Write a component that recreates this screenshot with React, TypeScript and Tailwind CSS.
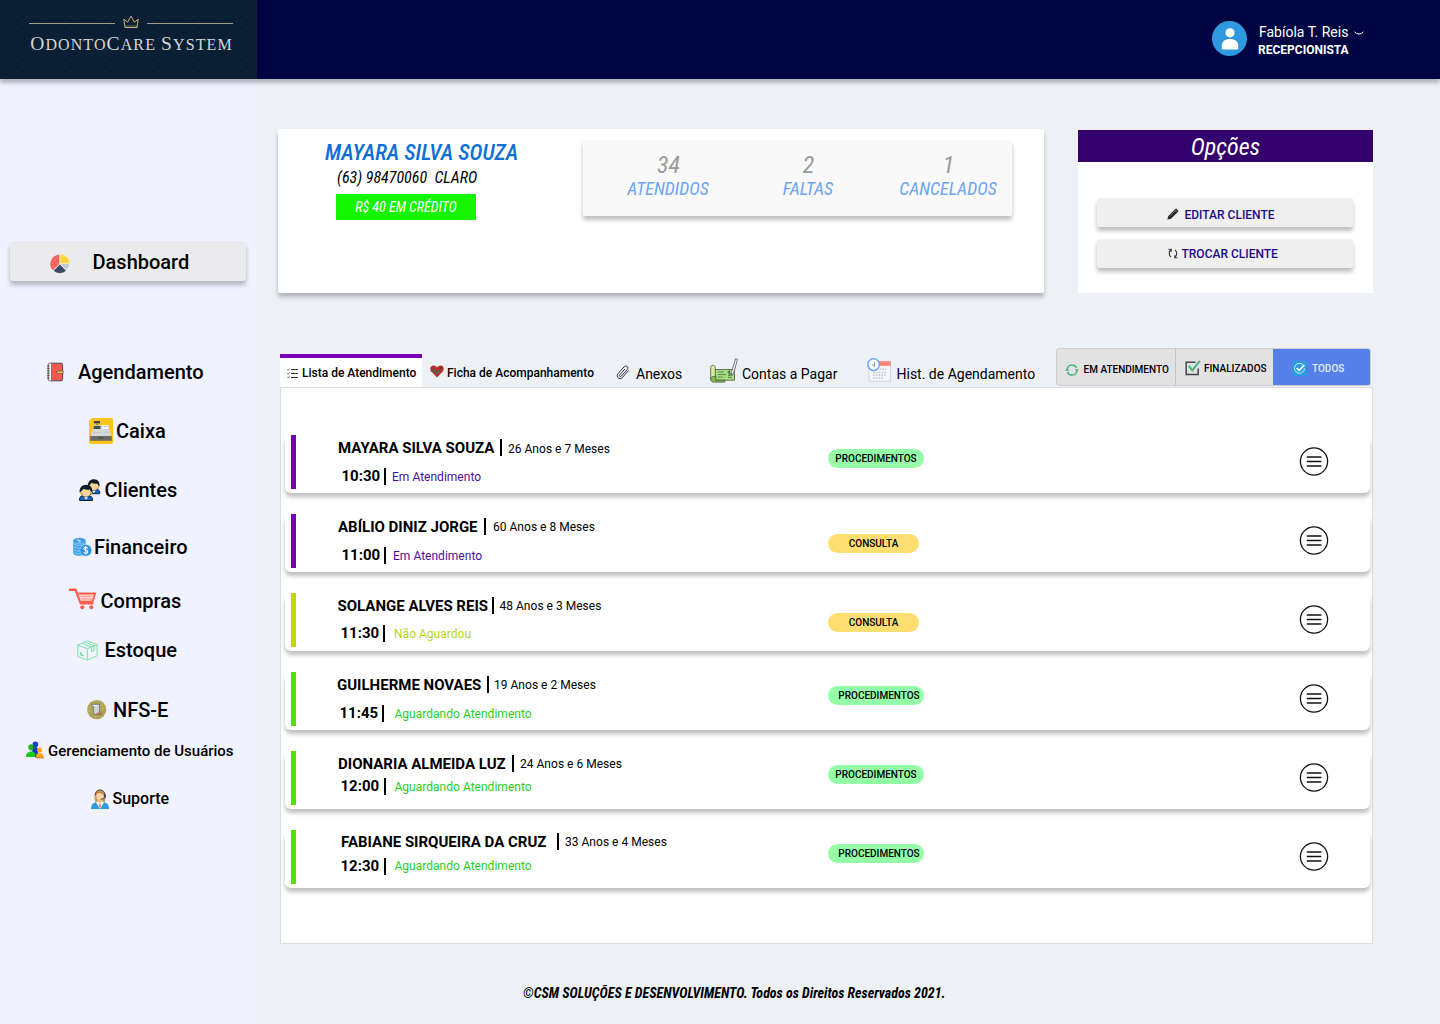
import type { ReactNode } from "react";

/* ---------- sidebar icons ---------- */

const PieIcon = () => (
  <svg className="h-5 w-5" viewBox="0 0 20 20">
    <path d="M9.3 10 L9.3 .8 A9.3 9.3 0 0 0 2.6 16.2 Z" fill="#f8605a" />
    <path d="M10.4 9.3 V.3 A9.3 9.3 0 0 1 19.6 9.3 Z" fill="#ffd93b" />
    <path d="M10.6 10 H19 A9 9 0 0 1 16.6 15.8 Z" fill="#c3c6cc" />
    <path d="M9.8 10.6 L16 16.8 A9 9 0 0 1 3.6 16.8 Z" fill="#3f4b66" />
    <g fill="#fbb7a8">
      <circle cx="5" cy="6" r=".5" /><circle cx="7.3" cy="4" r=".5" /><circle cx="3" cy="9" r=".5" />
      <circle cx="6" cy="9" r=".5" /><circle cx="3.5" cy="12.5" r=".5" />
    </g>
    <g fill="#e8a72d">
      <circle cx="13" cy="4" r=".5" /><circle cx="15.5" cy="4" r=".5" /><circle cx="13" cy="7" r=".5" /><circle cx="16" cy="7" r=".5" />
    </g>
  </svg>
);

const AgendaIcon = () => (
  <svg className="h-5 w-[18px]" viewBox="0 0 18 20">
    <rect x="1.2" y="1.2" width="14.4" height="17.6" rx="1.6" fill="#f7594f" stroke="#434a56" />
    <path d="M1.8 1.6h2.6v16.8H1.8z" fill="#fff" />
    <path d="M4.6 1.5v17" stroke="#434a56" strokeWidth=".6" />
    <path d="M0 4h3M0 6.4h3M0 8.8h3M0 11.2h3M0 13.6h3M0 16h3" stroke="#434a56" strokeWidth=".7" />
    <path d="M9 10.3l2.2-1.2h5v2.4h-5z" fill="#f5c84b" stroke="#434a56" strokeWidth=".6" />
  </svg>
);

const CashIcon = () => (
  <svg className="h-[26px] w-6" viewBox="0 0 24 26">
    <path d="M3 0h19a2 2 0 0 1 2 2v22a2 2 0 0 1-2 2H2a2 2 0 0 1-2-2V3z" fill="#f9c51b" />
    <path d="M5 3h6v2.4H5z" fill="#3d4752" /><path d="M7.4 5.4h1.4V8H7.4z" fill="#777" />
    <path d="M4.5 7.5h15l2.6 10.5H2z" fill="#d5d6d8" />
    <path d="M5 8h6.5v3H4.4z" fill="#434c57" />
    <path d="M13.5 7h5.5v4h-5.5z" fill="#fff" /><path d="M14.5 8.5h3.5" stroke="#999" strokeWidth=".7" />
    <path d="M4.5 14.500h8M15 14.500h4.600" stroke="#c0c2c5" strokeWidth=".7" />
    <path d="M1.200 18h21.600v4.800H1.200z" fill="#6b6b66" />
    <path d="M9.500 20h5" stroke="#3b3b3b" strokeWidth="1" />
  </svg>
);

const Head = () => (
  <g>
    <path d="M.6 16v-1.800c0-2 2-2.800 4.400-3.200h4c2.400.4 4.400 1.200 4.400 3.200V16z" fill="#1264c6" stroke="#111c2c" />
    <path d="M5.300 11.500h3.600l-.6 2.500-1.300 1-1.300-1z" fill="#fff" />
    <ellipse cx="7" cy="7.400" rx="5.300" ry="5.200" fill="#f6d39a" stroke="#3a2d1a" strokeWidth=".6" />
    <path d="M.7 8C.1 3 3 .2 7.300.2S13.800 3.300 13.200 8l-1.400-1.200-1-1.800c-2 .5-4.500.2-6-.8L2.200 6.800z" fill="#121c24" />
    <circle cx="1.700" cy="8.400" r=".9" fill="#ffc52d" /><circle cx="12.300" cy="8.400" r=".9" fill="#ffc52d" />
  </g>
);

const ClientsIcon = () => (
  <svg className="h-[22px] w-[22px]" viewBox="0 0 22 22">
    <g transform="translate(8.4 0) scale(.92)"><Head /></g>
    <g transform="translate(0 5.5)"><Head /></g>
  </svg>
);

const CoinsIcon = () => (
  <svg className="h-5 w-5" viewBox="0 0 20 20">
    <path d="M1 3.500v12.400c0 1.600 2.600 2.800 6 2.800s6-1 6.800-2.500V3.500z" fill="#3a9fe8" />
    <path d="M1 6c1 3 10 3.400 12.800 0M1 8.700c1 3 10 3.400 12.800 0M1 11.400c1 3 8 3.400 11 1.400M1 14.100c1 2.600 6 3.400 9 2.200" fill="none" stroke="#d8edff" strokeWidth=".6" />
    <ellipse cx="7.400" cy="3.700" rx="6.500" ry="3" fill="#3a9fe8" stroke="#d8edff" strokeWidth=".4" />
    <path d="M5 3.300c1-1 2.500.8 3.400 0M6.400 4.600c1 .6 2 .2 2.600-.3" stroke="#fff" fill="none" strokeWidth=".9" />
    <circle cx="13.800" cy="13.300" r="5.900" fill="#2992e4" stroke="#d8edff" strokeWidth=".5" />
    <path d="M15.900 11.400c-.5-1-1.200-1.200-2.100-1.200-2.600 0-2.600 2.600 0 3 2.800.5 2.600 3.300 0 3.300-1.100 0-1.800-.4-2.200-1.400M13.800 9v8.600" stroke="#fff" strokeWidth="1.100" fill="none" />
  </svg>
);

const CartRedIcon = () => (
  <svg className="-mt-1 h-[22px] w-7" viewBox="0 0 28 22">
    <path d="M0 1.800h6.600l5 13.400h12.800" fill="none" stroke="#fb5f4c" strokeWidth="2.400" strokeLinejoin="round" />
    <path d="M9.400 5.500h16.800l-2.600 8.200H12.200" fill="#f8d6cf" stroke="#fb5f4c" strokeWidth="1.800" />
    <path d="M11 8.300h14M12 11h12" stroke="#fb8a7b" strokeWidth=".8" />
    <circle cx="13.300" cy="19.200" r="2" fill="#fb5f4c" /><circle cx="22.300" cy="19.200" r="2" fill="#fb5f4c" />
  </svg>
);

const BoxIcon = () => (
  <svg className="h-[21px] w-[21px]" viewBox="0 0 21 21" fill="none" stroke="#6fe29a" strokeWidth=".9">
    <path d="M.8 5.200L10.300.8l9.800 3.800v11.200l-9.800 4.400-9.500-3.800z" />
    <path d="M.8 5.200l9.500 3.600 9.800-4.200M10.300 8.800v11.400M5 3.300l9.600 3.800v4.600l2.600-1.200V6L7.600 2" />
    <path d="M2.800 12.200l2.200 1.600M3 14.500l3.600 1.400" stroke="#35b56d" />
  </svg>
);

const InvoiceIcon = () => (
  <svg className="h-5 w-5" viewBox="0 0 20 20">
    <circle cx="9.700" cy="9.600" r="9.600" fill="#afa558" />
    <g fill="#d8d878"><circle cx="4" cy="6" r=".6" /><circle cx="16" cy="8" r=".6" /><circle cx="3" cy="11" r=".6" /><circle cx="8" cy="17" r=".6" /><circle cx="15" cy="5" r=".6" /></g>
    <path d="M4.800 4.300h7.600v10H6.800V6.400h-2z" fill="#e8e8f2" stroke="#5b5b66" strokeWidth=".7" />
    <path d="M9 6v7M10.800 6v7" stroke="#8a8fa8" strokeWidth=".5" />
    <path d="M10 13h4.600v1.600H10z" fill="#e87a62" stroke="#7c4433" strokeWidth=".4" />
  </svg>
);

const UsersIcon = () => (
  <svg className="-mt-[3px] h-[18px] w-[18px]" viewBox="0 0 18 18">
    <circle cx="9.400" cy="3.400" r="2.800" fill="#1838d8" /><path d="M6.200 15V9c0-4 6-4 6 0v6z" fill="#1838d8" />
    <circle cx="5.400" cy="6.300" r="3.100" fill="#1eb524" /><path d="M0 16c0-4 2.600-5.400 5.400-5.400S10.600 12 10.600 16z" fill="#19c91f" />
    <circle cx="13.700" cy="9" r="2.500" fill="#fca91b" /><path d="M9.600 17c0-4 1.600-5 4-5s4.200 1 4.200 5z" fill="#fca91b" />
    <path d="M7.700 4v6.500l2 2v4" stroke="#123f2c" strokeWidth=".7" fill="none" />
    <path d="M10 16.900h7.900" stroke="#c96a55" strokeWidth=".9" />
  </svg>
);

const SupportIcon = () => (
  <svg className="-mt-px h-5 w-[18px]" viewBox="0 0 18 20">
    <path d="M4.400 13.200C2.600 8 3.200 1 9 .8c5.800.2 6.400 7 4.800 12.400z" fill="#c99c5a" />
    <path d="M0 20c0-5 2.400-6.200 6-7h6c3.600.8 6 2 6 7z" fill="#2c9be0" />
    <path d="M5 13.200l4 6.800 4-6.800-2-.8H7z" fill="#fff" />
    <path d="M9 14l-1 2 1 4 1-4z" fill="#eb5e52" />
    <path d="M7.200 10h3.600v3L9 14.300 7.200 13z" fill="#f1c295" />
    <ellipse cx="9" cy="6.800" rx="3.600" ry="4.300" fill="#fad5ab" />
    <path d="M5.200 6.300c1-3 4-3.400 7.600 0l.4-2.200C11 1.600 7 1.600 4.800 4z" fill="#d8813f" />
    <path d="M4.200 6.200C4.400-.8 13.600-.8 14 6.200v2c-.8 1.600-2.600 2-4.600 2" fill="none" stroke="#444a55" strokeWidth="1" />
    <path d="M13 5.200h2v3.600h-2z" fill="#444a55" />
  </svg>
);

/* ---------- tab and button icons ---------- */

const ListCheckIcon = () => (
  <svg className="h-[11px] w-[11px]" viewBox="0 0 11 11" fill="none" stroke="#333" strokeWidth="1">
    <path d="M4 1.500H11M4 5.500H11M4 9.500H11" />
    <path d="M.3 1.600l.9.8L2.700.6M.3 5.400l.9.8 1.500-1.800M.3 9.200l.9.8 1.500-1.800" strokeWidth=".7" />
  </svg>
);

const HeartIcon = () => (
  <svg className="-mt-[3px] h-[13px] w-[14px]" viewBox="0 0 14 13">
    <path d="M7 12.400L1.300 6.600C-.8 4 .5.6 3.400.5 5 .5 6.200 1.300 7 2.500 7.800 1.300 9 .5 10.600.5c2.900.1 4.200 3.500 2.100 6.100z" fill="#b8312e" />
    <path d="M.8 6.500H4l1-2.300 1.500 5 1.300-3.800.7 1.300h1.800" fill="none" stroke="#2d7653" strokeWidth="1" />
    <path d="M11.800 1.500l-1.600 2.300" stroke="#4f1713" strokeWidth="1" />
  </svg>
);

const ClipIcon = () => (
  <svg className="-mt-[3px] h-[15px] w-[14px]" viewBox="0 0 14 15" fill="none" stroke="#333a40" strokeWidth="1" strokeLinecap="round">
    <path d="M8.600 4.300L3.700 9.900c-.9 1.200.6 2.400 1.600 1.300l6-6.800c1.900-2.300-1-4.900-3-2.800L2 8.600c-2.400 3 1.300 6.900 4.200 4.200l6.300-7.200" />
  </svg>
);

const CheckBookIcon = () => (
  <svg className="h-[25px] w-7" viewBox="0 0 28 25">
    <path d="M5 11.500h19.500v10.700H5z" fill="#a4dc80" stroke="#4b5b3f" strokeWidth=".8" />
    <path d="M.7 9.500c0-3 4.600-3 4.600 0v10h-2c-1.500 0-2.600 1-2.600 2.500z" fill="#d7ed9f" stroke="#4b5b3f" strokeWidth=".8" />
    <path d="M.7 21c0-2 1.600-2.600 3-2.600h2.200v3.800h9v1.900H3.500C1.800 24.100.7 23 .7 21z" fill="#84bd58" stroke="#4b5b3f" strokeWidth=".8" />
    <path d="M8 14h6M8 16.500h8M8 19h5M18 19.500h4" stroke="#4b6b3f" strokeWidth=".7" />
    <path d="M20 13.300c-2.600-.6-2.600 1.800-.6 2 2 .3 1.800 2.500-.9 1.900M19.300 12.300v6" stroke="#33522b" strokeWidth=".8" fill="none" />
    <path d="M25.600.700l1.800.8-3.600 13.300-2.200 3-.1-3.600z" fill="#eef0f0" stroke="#555d60" strokeWidth=".8" />
  </svg>
);

const CalendarClockIcon = () => (
  <svg className="h-6 w-6" viewBox="0 0 24 24">
    <path d="M2 4h21.500v19.300H2z" fill="#f5f6fa" stroke="#c9cdd6" strokeWidth=".8" />
    <path d="M11 3.200h12.700v4.600H11z" fill="#f28779" />
    <g stroke="#c3c6d0" strokeWidth="1.600" strokeDasharray="1.600 1.200">
      <path d="M12.500 11h7M6 14.500h14M6 17.300h14" /><path d="M6 20h11" />
    </g>
    <circle cx="6.600" cy="6.600" r="5.800" fill="#fff" stroke="#6aa7f5" strokeWidth="1.500" />
    <path d="M7.600 3.500v3.600H5M7.600 7v2" fill="none" stroke="#6a7890" strokeWidth=".8" />
  </svg>
);

const SyncGreenIcon = () => (
  <svg className="h-[14px] w-[14px]" viewBox="0 0 14 14" fill="none" stroke="#4fb37e" strokeWidth="1.500">
    <path d="M2.200 6.500C2.200 3.500 4.500 1.900 7 1.900c2 0 3.800 1 4.600 3M11.800 7.500c0 3-2.300 4.600-4.800 4.600-2 0-3.800-1-4.600-3" />
    <path d="M0 7.800l2.200-3 2.200 3zM14 6.200l-2.200 3-2.200-3z" fill="#4fb37e" stroke="none" />
  </svg>
);

const CheckBoxIcon = () => (
  <svg className="h-4 w-4" viewBox="0 0 16 16" fill="none">
    <path d="M10.500 2.200H1.200v12.200h12V8.500" stroke="#45464e" strokeWidth="1.500" />
    <path d="M3.800 5.900l3.500 4.400L14.800.9" stroke="#46b381" strokeWidth="2" />
  </svg>
);

const CheckBlueIcon = () => (
  <svg className="h-[15px] w-[15px]" viewBox="0 0 15 15" fill="none">
    <rect width="15" height="15" rx="3" fill="#2c9be0" />
    <path d="M11.300 4A5 5 0 1 0 12.500 7.600" stroke="#e6f6ff" strokeWidth=".9" />
    <path d="M4.600 7l2.500 2.400 5.200-5.200" stroke="#fff" strokeWidth="1.700" />
  </svg>
);

const PencilIcon = () => (
  <svg className="-mt-px h-3 w-3" viewBox="0 0 12 12">
    <path d="M.4 11.600l.9-3.600L8.300.9c.8-.8 3.600 1.900 2.800 2.800L4 10.700z" fill="#26282b" />
    <path d="M2.500 8.500l6-6M7.800 2l2.300 2.300" stroke="#999" strokeWidth=".6" />
  </svg>
);

const SwapIcon = () => (
  <svg className="-mt-px h-[11px] w-[10px]" viewBox="0 0 10 11" fill="none" stroke="#2e3033" strokeWidth="1.100">
    <path d="M3 9C.8 7.300.600 4 2.800 1.800M.7 1.200h2.500v2.500M7 2c2.200 1.700 2.400 5-.1 7.200M9.300 9.800H6.800V7.300" />
  </svg>
);

const MenuCircleIcon = () => (
  <svg className="h-[30px] w-[30px]" viewBox="0 0 30 30" fill="none" stroke="#111">
    <circle cx="15" cy="15.500" r="13.600" strokeWidth="1.300" />
    <path d="M7.800 11h14.600M7.800 15.500h14.600M7.800 20h14.600" strokeWidth="1.400" />
  </svg>
);

const CrownIcon = () => (
  <svg className="h-[14px] w-4" viewBox="0 0 16 14" fill="none" stroke="#c9b978" strokeWidth="1">
    <path d="M2 12.500L.8 4.200l3.800 3L8 1.200l3.400 6 3.800-3L14 12.500z" />
    <path d="M2 11h12" strokeWidth=".5" />
  </svg>
);

/* ---------- data ---------- */

type NavItem = { label: string; icon: ReactNode; row: string; slot: string; text: string };

const nav: NavItem[] = [
  { label: "Agendamento", icon: <AgendaIcon />, row: "mt-[75px] pl-[47px]", slot: "w-[31px]", text: "text-xl" },
  { label: "Caixa", icon: <CashIcon />, row: "mt-[27px] pl-[89px]", slot: "w-[27px]", text: "text-xl" },
  { label: "Clientes", icon: <ClientsIcon />, row: "mt-[27px] pl-[78.5px]", slot: "w-[26px]", text: "text-xl" },
  { label: "Financeiro", icon: <CoinsIcon />, row: "mt-[25px] pl-[72px]", slot: "w-[22px]", text: "text-xl" },
  { label: "Compras", icon: <CartRedIcon />, row: "mt-[22px] pl-[69px]", slot: "w-[31.5px]", text: "text-xl" },
  { label: "Estoque", icon: <BoxIcon />, row: "mt-[17px] pl-[77px]", slot: "w-[27.5px]", text: "text-xl" },
  { label: "NFS-E", icon: <InvoiceIcon />, row: "mt-[28px] pl-[87px]", slot: "w-[26px]", text: "text-xl" },
  { label: "Gerenciamento de Usuários", icon: <UsersIcon />, row: "mt-[9px] pl-[26px]", slot: "w-[22px]", text: "text-[15px]" },
  { label: "Suporte", icon: <SupportIcon />, row: "mt-4 pl-[91px]", slot: "w-[21.5px]", text: "text-base" },
];

type Visit = {
  name: string; age: string; time: string; status: string; kind: "PROCEDIMENTOS" | "CONSULTA";
  bar: string; color: string;
  top: string; nameBox: string; ageGap: string;
  bottom: string; timeBox: string; statusGap: string;
  badge: string;
};

const visits: Visit[] = [
  { name: "MAYARA SILVA SOUZA", age: "26 Anos e 7 Meses", time: "10:30", status: "Em Atendimento", kind: "PROCEDIMENTOS", bar: "bg-[#7500b8]", color: "text-[#4b0d9b]", top: "pt-[4px] pl-[42px]", nameBox: "w-[162px]", ageGap: "pt-[3px] pl-[6px]", bottom: "mt-[11px] pl-[45.5px]", timeBox: "w-[42.5px]", statusGap: "pt-px pl-[6px]", badge: "mt-[14px] w-24" },
  { name: "ABÍLIO DINIZ JORGE", age: "60 Anos e 8 Meses", time: "11:00", status: "Em Atendimento", kind: "CONSULTA", bar: "bg-[#7500b8]", color: "text-[#4b0d9b]", top: "pt-[4px] pl-[42px]", nameBox: "w-[146px]", ageGap: "pt-px pl-[7px]", bottom: "mt-[11px] pl-[45.5px]", timeBox: "w-[42.5px]", statusGap: "pt-px pl-[7px]", badge: "mt-[20px] w-[91px]" },
  { name: "SOLANGE ALVES REIS", age: "48 Anos e 3 Meses", time: "11:30", status: "Não Aguardou", kind: "CONSULTA", bar: "bg-[#bfd900]", color: "text-[#b9d417]", top: "pt-[4px] pl-[41.5px]", nameBox: "w-[154.5px]", ageGap: "pt-px pl-[5.5px]", bottom: "mt-[10px] pl-[44.5px]", timeBox: "w-[42.5px]", statusGap: "pt-px pl-[9px]", badge: "mt-[20px] w-[91px]" },
  { name: "GUILHERME NOVAES", age: "19 Anos e 2 Meses", time: "11:45", status: "Aguardando Atendimento", kind: "PROCEDIMENTOS", bar: "bg-[#55e000]", color: "text-[#1fcf1f]", top: "pt-[4px] pl-[41px]", nameBox: "w-[150px]", ageGap: "pt-px pl-[5px]", bottom: "mt-[11px] pl-[43.5px]", timeBox: "w-[42.5px]", statusGap: "pt-px pl-[10.5px]", badge: "mt-[14px] w-24 pl-1.5" },
  { name: "DIONARIA ALMEIDA LUZ", age: "24 Anos e 6 Meses", time: "12:00", status: "Aguardando Atendimento", kind: "PROCEDIMENTOS", bar: "bg-[#55e000]", color: "text-[#1fcf1f]", top: "pt-[4px] pl-[42px]", nameBox: "w-[174px]", ageGap: "pt-px pl-[6px]", bottom: "mt-[5px] pl-[44.5px]", timeBox: "w-[43.5px]", statusGap: "pt-px pl-[8.5px]", badge: "mt-[14px] w-24" },
  { name: "FABIANE SIRQUEIRA DA CRUZ", age: "33 Anos e 4 Meses", time: "12:30", status: "Aguardando Atendimento", kind: "PROCEDIMENTOS", bar: "bg-[#55e000]", color: "text-[#1fcf1f]", top: "pt-[1px] pl-[45px]", nameBox: "w-[216px]", ageGap: "pt-px pl-[6px]", bottom: "mt-[6px] pl-[44.5px]", timeBox: "w-[43.5px]", statusGap: "pb-px pl-[8.5px]", badge: "mt-[14px] w-24 pl-1.5" },
];

const stats = [
  { value: "34", label: "ATENDIDOS" },
  { value: "2", label: "FALTAS" },
  { value: "1", label: "CANCELADOS" },
];

/* ---------- sections ---------- */

function Header() {
  return (
    <header className="relative z-10 flex h-[79px] bg-[#000442] shadow-[0_4px_4px_rgba(0,0,0,0.25)]">
      <div className="flex w-[257px] flex-col items-center bg-[#0a1f33] bg-[radial-gradient(#1c3550_0.7px,transparent_0.9px)] bg-[size:11px_11px] pt-[15px] pl-[5px]">
        <div className="flex items-center gap-2">
          <div className="mt-[3px] h-px w-[86px] bg-[#a09d8c]" />
          <CrownIcon />
          <div className="mt-[3px] h-px w-[86px] bg-[#a09d8c]" />
        </div>
        <div className="mt-[4px] -mr-px font-['Liberation_Serif',serif] text-[16px] leading-[22px] tracking-[1.1px] whitespace-nowrap text-[#d6d6d8]">
          <span className="text-[19.5px]">O</span>DONTO<span className="text-[19.5px]">C</span>ARE <span className="text-[19.5px]">S</span>YSTEM
        </div>
      </div>
      <div className="ml-auto flex pt-[21px] pr-[76px] text-white">
        <div className="flex h-[35px] w-[35px] items-center justify-center rounded-full bg-[#2f98df]">
          <svg className="h-[22px] w-[18px]" viewBox="0 0 18 22" fill="#fff">
            <circle cx="9" cy="4.800" r="4.600" />
            <path d="M.8 20v-2.600C.8 13.500 4 11 9 11s8.200 2.500 8.200 6.400V20c0 1-.6 1.500-1.500 1.500H2.300C1.400 21.500.8 21 .8 20z" />
          </svg>
        </div>
        <div className="ml-[11px] flex flex-col">
          <div className="flex h-[22px] items-center">
            <span className="w-[91px] pl-px text-[14px] leading-[22px]">Fabíola T. Reis</span>
            <svg className="mt-[2px] ml-[5px] h-1 w-[10px]" viewBox="0 0 10 4" fill="none" stroke="#fff" strokeWidth="1">
              <path d="M.5 .8Q2.500 3 5 3T9.500 .8" />
            </svg>
          </div>
          <span className="text-xs leading-[14px] font-bold">RECEPCIONISTA</span>
        </div>
      </div>
    </header>
  );
}

function Sidebar() {
  return (
    <aside className="w-[256px] shrink-0 bg-[#f0f2ff] pt-[162px] font-medium text-black">
      <div className="ml-[10px] flex h-10 w-[236px] items-center rounded-[4px] bg-[#ebebed] pl-10 shadow-[0_4px_4px_rgba(0,0,0,0.25)]">
        <div className="w-[42.5px] pt-[5px]"><PieIcon /></div>
        <span className="pt-[2px] text-xl">Dashboard</span>
      </div>
      <nav>
        {nav.map((n) => (
          <div key={n.label} className={`flex h-8 items-center whitespace-nowrap ${n.row}`}>
            <div className={`shrink-0 ${n.slot}`}>{n.icon}</div>
            <span className={n.text}>{n.label}</span>
          </div>
        ))}
      </nav>
    </aside>
  );
}

function ClientCard() {
  return (
    <section className="flex h-[164px] w-[766px] rounded-[2px] bg-white pt-[11px] [font-family:'Roboto_Condensed',Roboto,sans-serif] italic shadow-[0_4px_4px_rgba(0,0,0,0.25)] [font-stretch:75%]">
      <div className="ml-[46px] w-[259px] whitespace-nowrap">
        <div className="pl-px text-[22px] leading-[26px] font-medium text-[#0b6fd6]">MAYARA SILVA SOUZA</div>
        <div className="pl-[13px] text-base leading-6 whitespace-pre text-black">(63) 98470060  CLARO</div>
        <div className="mt-[4px] ml-3 flex h-[26px] w-[140px] items-center justify-center bg-[#15f500] text-sm font-normal text-white">R$ 40 EM CRÉDITO</div>
      </div>
      <div className="flex h-[76px] w-[429px] rounded-[2px] bg-[#f9f9f9] pt-[11px] pl-[15px] shadow-[0_4px_4px_rgba(0,0,0,0.25)]">
        {stats.map((s) => (
          <div key={s.label} className="w-[140px] shrink-0 text-center">
            <div className="pl-px text-2xl leading-7 font-normal text-[#98999b]">{s.value}</div>
            <div className="text-lg leading-5 text-[#6ba4f3]">{s.label}</div>
          </div>
        ))}
      </div>
    </section>
  );
}

function OptionsCard() {
  const button = "ml-[18.5px] flex h-[29px] w-[256px] items-center rounded-[2px] bg-[#efefef] text-xs font-medium text-[#1d0b8a] shadow-[0_4px_4px_rgba(0,0,0,0.25)]";
  return (
    <section className="mt-px ml-[34px] h-[163px] w-[295px] bg-white">
      <h2 className="flex h-8 items-center justify-center bg-[#34006b] pt-px [font-family:'Roboto_Condensed',Roboto,sans-serif] text-2xl text-white italic [font-stretch:75%]">Opções</h2>
      <div className="pt-9">
        <button className={`${button} pt-[4px] pl-[70px]`}><PencilIcon /><span className="pl-[6px]">EDITAR CLIENTE</span></button>
        <button className={`${button} mt-[12px] pt-px pl-[71px]`}><SwapIcon /><span className="pl-[4px]">TROCAR CLIENTE</span></button>
      </div>
    </section>
  );
}

function TabBar() {
  return (
    <div className="mt-[55px] flex h-[39px] w-[1093px] items-end pl-[2px] whitespace-nowrap text-black">
      <div className="flex h-[33px] w-[142px] shrink-0 items-center border-t-4 border-[#7a00b8] bg-white pl-[7px] text-xs font-medium">
        <div className="pt-px"><ListCheckIcon /></div><span className="pl-1">Lista de Atendimento</span>
      </div>
      <div className="flex h-[29px] w-[194px] shrink-0 items-center pt-px pl-2 text-xs font-medium">
        <HeartIcon /><span className="pl-[3px]">Ficha de Acompanhamento</span>
      </div>
      <div className="flex h-[29px] w-[94px] shrink-0 items-center pt-[3px] text-sm">
        <ClipIcon /><span className="pl-[6px]">Anexos</span>
      </div>
      <div className="flex h-[29px] w-[157px] shrink-0 items-center text-sm">
        <div className="-mt-1"><CheckBookIcon /></div><span className="pt-[3px] pl-1">Contas a Pagar</span>
      </div>
      <div className="flex h-[29px] w-[189px] shrink-0 items-center text-sm">
        <div className="-mt-[6px]"><CalendarClockIcon /></div><span className="pt-[3px] pl-[5.5px]">Hist. de Agendamento</span>
      </div>
      <div className="mb-px flex h-[38px] w-[315px] shrink-0 overflow-hidden rounded-[3px] border border-[#cfcfd2] bg-[#e2e2e2] text-[10px] font-medium">
        <div className="flex w-[119px] items-center border-r border-[#c4c4c6] pt-[5px] pl-2"><SyncGreenIcon /><span className="pl-[4.5px]">EM ATENDIMENTO</span></div>
        <div className="flex w-[97px] items-center pt-[3px] pl-[8.5px]"><div className="-mt-px"><CheckBoxIcon /></div><span className="pl-[3.5px]">FINALIZADOS</span></div>
        <div className="-my-px -mr-px flex flex-1 items-center bg-[#557fe9] pt-[2px] pl-[19px] text-[#e3edff]"><div className="pt-px"><CheckBlueIcon /></div><span className="pl-[5px]">TODOS</span></div>
      </div>
    </div>
  );
}

function VisitRow({ v }: { v: Visit }) {
  return (
    <div className="flex h-[58px] w-[1085px] rounded-[6px] bg-white pl-[6px] whitespace-nowrap text-black shadow-[0_4px_4px_rgba(0,0,0,0.25)]">
      <div className={`h-[54px] w-[5px] ${v.bar}`} />
      <div className="w-[532px]">
        <div className={`flex h-[21px] items-center ${v.top}`}>
          <span className={`shrink-0 pt-[2px] text-[15px] font-bold ${v.nameBox}`}>{v.name}</span>
          <span className="h-[17px] w-[2px] bg-black" />
          <span className={`text-xs tracking-[0.02px] ${v.ageGap}`}>{v.age}</span>
        </div>
        <div className={`flex h-[18px] items-center ${v.bottom}`}>
          <span className={`shrink-0 text-[15px] font-bold ${v.timeBox}`}>{v.time}</span>
          <span className="h-[17px] w-[2px] bg-black" />
          <span className={`text-xs tracking-[0.02px] ${v.statusGap} ${v.color}`}>{v.status}</span>
        </div>
      </div>
      <div className="w-[471px]">
        <div className={`flex h-[19px] items-center justify-center rounded-full text-[10px] font-medium ${v.kind === "CONSULTA" ? "bg-[#fdde70]" : "bg-[#94ffa6]"} ${v.badge}`}>{v.kind}</div>
      </div>
      <div className="pt-[11px]"><MenuCircleIcon /></div>
    </div>
  );
}

export default function App() {
  return (
    <div className="flex h-[1024px] w-[1440px] flex-col overflow-hidden bg-[#edf1f6] font-['Roboto',sans-serif]">
      <Header />
      <div className="flex flex-1">
        <Sidebar />
        <main className="flex-1 pt-[50px] pl-[22px]">
          <div className="flex">
            <ClientCard />
            <OptionsCard />
          </div>
          <TabBar />
          <section className="ml-[2px] flex h-[557px] w-[1093px] flex-col gap-[21px] border border-[#d9dce1] bg-white pt-[47px] pl-1">
            {visits.map((v) => <VisitRow key={v.name} v={v} />)}
          </section>
          <footer className="mt-[40px] ml-[245px] [font-family:'Roboto_Condensed',Roboto,sans-serif] text-sm leading-[18px] font-bold whitespace-nowrap text-black italic [font-stretch:75%]">
            ©CSM SOLUÇÕES E DESENVOLVIMENTO. Todos os Direitos Reservados 2021.
          </footer>
        </main>
      </div>
    </div>
  );
}
